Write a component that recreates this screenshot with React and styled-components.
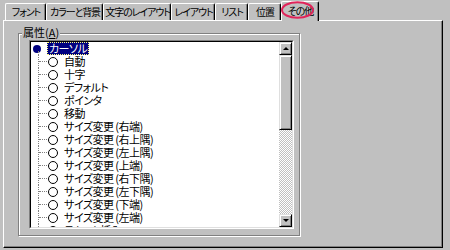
import React from 'react';
import styled, { createGlobalStyle } from 'styled-components';

const GlobalStyle = createGlobalStyle`
  html, body {
    margin: 0;
    padding: 0;
    background: #c0c0c0;
  }
  body {
    font-family: "Noto Sans CJK JP", "Liberation Sans", sans-serif;
    font-size: 11px;
    font-feature-settings: "palt";
    color: #000;
  }
`;

// ダイアログ全体
const Dialog = styled.div`
  position: relative;
  width: 450px;
  height: 250px;
  box-sizing: border-box;
  padding: 1px 0 0 3px;
  overflow: hidden;
  background: #c0c0c0;
`;

const TabStrip = styled.div`
  position: relative;
  z-index: 1;
  display: flex;
  align-items: flex-start;
  height: 19px;
  padding-left: 2px;
`;

const Tab = styled.div`
  box-sizing: border-box;
  width: ${(p) => p.$w}px;
  height: ${(p) => (p.$active ? 20 : 17)}px;
  margin-top: ${(p) => (p.$active ? 0 : 2)}px;
  display: flex;
  align-items: center;
  justify-content: center;
  padding-bottom: ${(p) => (p.$active ? 3 : 1)}px;
  padding-left: 1px;
  border-top: 1px solid #fff;
  border-left: 1px solid #fff;
  border-right: 1px solid #000;
  border-radius: 2px 2px 0 0;
  box-shadow: inset -1px 0 0 #808080;
  background: #c0c0c0;
  font-size: 10px;
  letter-spacing: -1.1px;
  line-height: 13px;
  white-space: nowrap;
`;

// 注釈の赤い丸
const Mark = styled.svg`
  position: absolute;
  left: 281px;
  top: 1px;
  z-index: 2;
`;

const Pane = styled.div`
  box-sizing: border-box;
  width: 440px;
  height: 228px;
  padding: 12px 0 0 14px;
  border-top: 1px solid #fff;
  border-left: 1px solid #fff;
  border-right: 1px solid #000;
  border-bottom: 1px solid #000;
  box-shadow: inset -1px -1px 0 #808080;
`;

const GroupBox = styled.div`
  position: relative;
  box-sizing: border-box;
  width: 282px;
  height: 203px;
  padding: 6px 0 0 10px;
  border: 1px solid #808080;
  box-shadow: inset 1px 1px 0 #fff, 1px 1px 0 #fff;
`;

const Legend = styled.span`
  position: absolute;
  top: -8px;
  left: 3px;
  padding: 0 1px;
  line-height: 13px;
  background: #c0c0c0;
  u {
    text-decoration: underline;
  }
`;

const Sunken = styled.div`
  box-sizing: border-box;
  width: 265px;
  height: 189px;
  border-top: 1px solid #808080;
  border-left: 1px solid #808080;
  border-right: 1px solid #fff;
  border-bottom: 1px solid #fff;
`;

const SunkenInner = styled.div`
  box-sizing: border-box;
  height: 100%;
  display: flex;
  border-top: 1px solid #000;
  border-left: 1px solid #000;
  border-right: 1px solid #dfdfdf;
  border-bottom: 1px solid #dfdfdf;
  overflow: hidden;
`;

const List = styled.div`
  flex: 1;
  background: #fff;
  overflow: hidden;
`;

const Row = styled.div`
  display: flex;
  align-items: center;
  height: 13px;
  white-space: nowrap;
`;

const Connector = styled.span`
  position: relative;
  flex: none;
  width: 16px;
  height: 13px;
  display: flex;
  align-items: center;
  padding-left: 2px;
  box-sizing: border-box;

  &::before {
    content: '';
    position: absolute;
    left: 7px;
    top: ${(p) => (p.$root ? 9 : 0)}px;
    bottom: 0;
    border-left: 1px dotted #808080;
  }

  &::after {
    content: '';
    display: ${(p) => (p.$root ? 'none' : 'block')};
    position: absolute;
    left: 8px;
    top: 6px;
    width: 8px;
    border-top: 1px dotted #808080;
  }
`;

const Bullet = styled.span`
  width: 8px;
  height: 8px;
  border-radius: 50%;
  background: #000080;
`;

const Radio = styled.span`
  flex: none;
  box-sizing: border-box;
  width: 10px;
  height: 10px;
  margin-left: 1px;
  border: 1px solid #000;
  border-radius: 50%;
`;

const Label = styled.span`
  margin-left: ${(p) => (p.$selected ? 0 : 4)}px;
  padding: 0 1px;
  line-height: 11px;
  letter-spacing: -0.5px;
  color: ${(p) => (p.$selected ? '#fff' : '#000')};
  background: ${(p) => (p.$selected ? '#000080' : 'transparent')};
  border: 1px dotted ${(p) => (p.$selected ? '#ffff80' : 'transparent')};
`;

const ScrollBar = styled.div`
  flex: none;
  width: 13px;
  display: flex;
  flex-direction: column;
`;

const ScrollButton = styled.div`
  box-sizing: border-box;
  height: ${(p) => p.$h}px;
  display: flex;
  align-items: center;
  justify-content: center;
  background: #c0c0c0;
  border-top: 1px solid #dfdfdf;
  border-left: 1px solid #dfdfdf;
  border-right: 1px solid #000;
  border-bottom: 1px solid #000;
  box-shadow: inset 1px 1px 0 #fff, inset -1px -1px 0 #808080;
`;

const Arrow = styled.span`
  width: 0;
  height: 0;
  border-left: 3px solid transparent;
  border-right: 3px solid transparent;
  ${(p) => (p.$down ? 'border-top: 3px solid #000;' : 'border-bottom: 3px solid #000;')}
`;

const Track = styled.div`
  flex: 1;
  background: repeating-conic-gradient(#fff 0 25%, #c0c0c0 0 50%) 0 0 / 2px 2px;
`;

const items = [
  '自動',
  '十字',
  'デフォルト',
  'ポインタ',
  '移動',
  'サイズ変更 (右端)',
  'サイズ変更 (右上隅)',
  'サイズ変更 (左上隅)',
  'サイズ変更 (上端)',
  'サイズ変更 (右下隅)',
  'サイズ変更 (左下隅)',
  'サイズ変更 (下端)',
  'サイズ変更 (左端)',
  'テキスト挿入',
];

const tabs = [
  { label: 'フォント', w: 41 },
  { label: 'カラーと背景', w: 57 },
  { label: '文字のレイアウト', w: 68 },
  { label: 'レイアウト', w: 44 },
  { label: 'リスト', w: 33 },
  { label: '位置', w: 33 },
  { label: 'その他', w: 38, active: true },
];

export default function App() {
  return (
    <>
      <GlobalStyle />
      <Dialog>
        <TabStrip>
          {tabs.map((t) => (
            <Tab key={t.label} $w={t.w} $active={t.active}>
              {t.label}
            </Tab>
          ))}
        </TabStrip>
        <Mark width="34" height="19" viewBox="0 0 34 19">
          <ellipse cx="16.5" cy="9" rx="15.5" ry="7.8" fill="none" stroke="#e0245a" strokeWidth="2" />
        </Mark>
        <Pane>
          <GroupBox>
            <Legend>
              属性(<u>A</u>)
            </Legend>
            <Sunken>
              <SunkenInner>
                <List>
                  <Row>
                    <Connector $root>
                      <Bullet />
                    </Connector>
                    <Label $selected>カーソル</Label>
                  </Row>
                  {items.map((name) => (
                    <Row key={name}>
                      <Connector />
                      <Radio />
                      <Label>{name}</Label>
                    </Row>
                  ))}
                </List>
                <ScrollBar>
                  <ScrollButton $h={13}>
                    <Arrow />
                  </ScrollButton>
                  <ScrollButton $h={75} />
                  <Track />
                  <ScrollButton $h={13}>
                    <Arrow $down />
                  </ScrollButton>
                </ScrollBar>
              </SunkenInner>
            </Sunken>
          </GroupBox>
        </Pane>
      </Dialog>
    </>
  );
}
